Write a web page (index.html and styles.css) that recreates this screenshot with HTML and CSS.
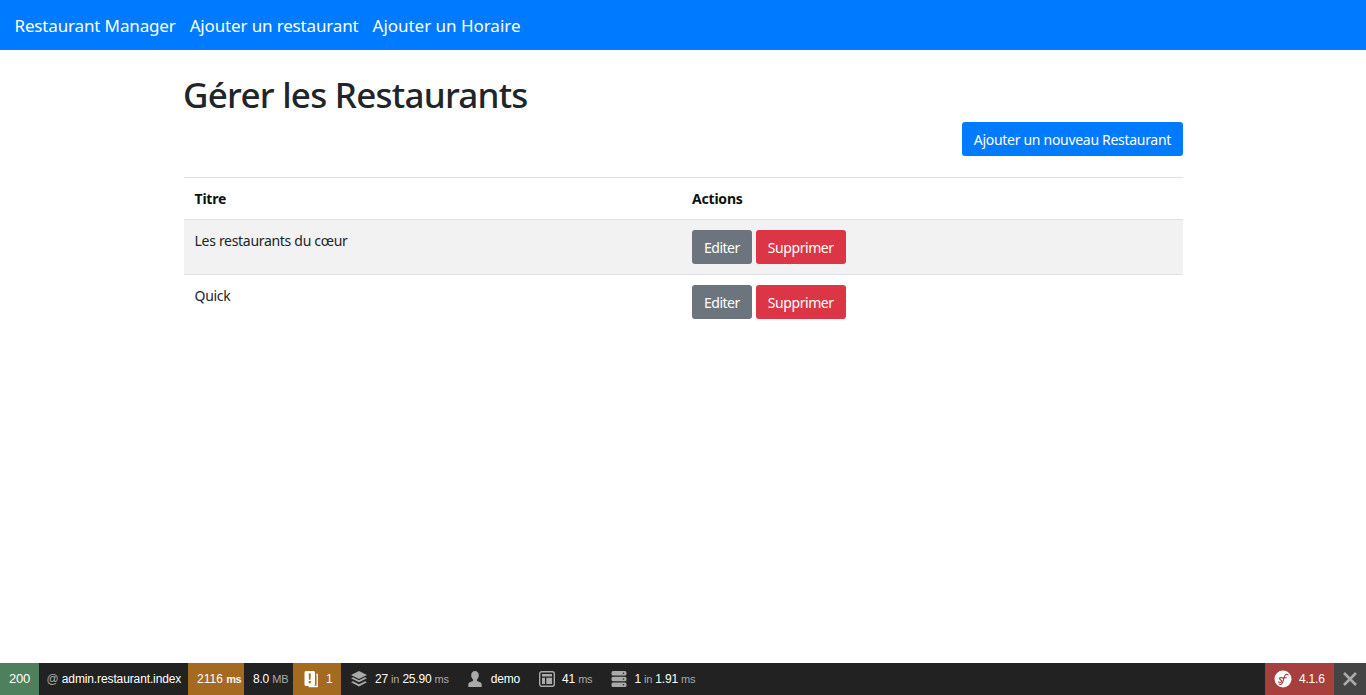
FILE: index.html
```html
<!DOCTYPE html>
<html lang="fr">
<head>
    <meta charset="UTF-8">
    <title>Gérer les Restaurants</title>
    <link rel="stylesheet" href="styles.css">
</head>
<body>
    <nav class="navbar">
        <a class="nav-link" href="#">Restaurant Manager</a>
        <a class="nav-link" href="#">Ajouter un restaurant</a>
        <a class="nav-link" href="#">Ajouter un Horaire</a>
    </nav>
    <main class="container">
        <h1 class="title">Gérer les Restaurants</h1>
        <div class="actions-bar">
            <a class="btn btn-primary" href="#">Ajouter un nouveau Restaurant</a>
        </div>
        <table class="table">
            <thead>
                <tr>
                    <th class="col-title">Titre</th>
                    <th>Actions</th>
                </tr>
            </thead>
            <tbody>
                <tr class="odd">
                    <td>Les restaurants du cœur</td>
                    <td>
                        <div class="row-actions">
                            <a class="btn btn-secondary" href="#">Editer</a>
                            <a class="btn btn-danger" href="#">Supprimer</a>
                        </div>
                    </td>
                </tr>
                <tr>
                    <td>Quick</td>
                    <td>
                        <div class="row-actions">
                            <a class="btn btn-secondary" href="#">Editer</a>
                            <a class="btn btn-danger" href="#">Supprimer</a>
                        </div>
                    </td>
                </tr>
            </tbody>
        </table>
    </main>

    <div class="toolbar">
        <div class="tb-block tb-status">200</div>
        <div class="tb-block tb-route"><span class="tb-at">@</span> admin.restaurant.index</div>
        <div class="tb-block tb-orange tb-request">2116 <span class="tb-unit tb-unit-light">ms</span></div>
        <div class="tb-block tb-memory">8.0 <span class="tb-unit">MB</span></div>
        <div class="tb-block tb-orange tb-log">
            <svg class="tb-icon" width="16" height="18" viewBox="0 0 16 18">
                <path fill="#fff" d="M3 1h7.500a1.500 1.500 0 0 1 1.500 1.500v12a1.500 1.500 0 0 1-1.500 1.500H3a1.500 1.500 0 0 1-1.500-1.500v-12A1.500 1.500 0 0 1 3 1z"/>
                <path fill="#a46a1f" d="M5.700 3.500h2.100l-.3 6.300H6zM5.700 11h2.100v2.200H5.700z"/>
                <path fill="none" stroke="#fff" stroke-width="1.300" d="M13.300 4.500h.9v12h-8.500"/>
            </svg>
            <span class="tb-num">1</span>
        </div>
        <div class="tb-block tb-twig">
            <svg class="tb-icon" width="18" height="18" viewBox="0 0 18 18">
                <path fill="#aaa" d="M9 1 17 5 9 9 1 5z"/>
                <path fill="#aaa" d="M1 8.200 3 7.200 9 10.200 15 7.200 17 8.200 9 12.300z"/>
                <path fill="#aaa" d="M1 12.200 3 11.200 9 14.200 15 11.200 17 12.200 9 16.500z"/>
            </svg>
            <span>27 <span class="tb-unit">in</span> 25.90 <span class="tb-unit">ms</span></span>
        </div>
        <div class="tb-block tb-user">
            <svg class="tb-icon" width="16" height="18" viewBox="0 0 16 18">
                <path fill="#aaa" d="M8 1c2.300 0 3.800 1.800 3.800 4.300 0 2-.9 3.500-1.800 4.300v1.200c0 .7 4.700 1.300 4.700 3.500V17H1.300v-2.700c0-2.200 4.700-2.800 4.700-3.500V9.600C5.100 8.800 4.200 7.300 4.200 5.300 4.200 2.800 5.700 1 8 1z"/>
            </svg>
            <span>demo</span>
        </div>
        <div class="tb-block tb-time">
            <svg class="tb-icon" width="18" height="18" viewBox="0 0 18 18">
                <rect x="1.700" y="1.700" width="14.600" height="14.600" rx="2" fill="none" stroke="#aaa" stroke-width="1.400"/>
                <path fill="#aaa" d="M4 4h10v2.400H4zM4 7.800h3v6.200H4zM8.300 7.800H14v6.200H8.300z"/>
            </svg>
            <span>41 <span class="tb-unit">ms</span></span>
        </div>
        <div class="tb-block tb-db">
            <svg class="tb-icon" width="18" height="18" viewBox="0 0 18 18">
                <path fill="#aaa" fill-rule="evenodd" d="M3 1h12a1.500 1.500 0 0 1 1.500 1.500v1.500A1.500 1.500 0 0 1 15 5.500H3A1.500 1.500 0 0 1 1.500 4V2.500A1.500 1.500 0 0 1 3 1zm10.500 1.500a.8.800 0 1 0 0 1.600.8.800 0 0 0 0-1.600z"/>
                <path fill="#aaa" fill-rule="evenodd" d="M3 6.800h12a1.500 1.500 0 0 1 1.500 1.500v1.400A1.500 1.500 0 0 1 15 11.200H3a1.500 1.500 0 0 1-1.500-1.500V8.300A1.500 1.500 0 0 1 3 6.800zm10.500 1.400a.8.800 0 1 0 0 1.600.8.800 0 0 0 0-1.600z"/>
                <path fill="#aaa" fill-rule="evenodd" d="M3 12.500h12a1.500 1.500 0 0 1 1.500 1.500v1.500A1.500 1.500 0 0 1 15 17H3a1.500 1.500 0 0 1-1.500-1.500V14A1.500 1.500 0 0 1 3 12.500zm10.500 1.400a.8.800 0 1 0 0 1.600.8.800 0 0 0 0-1.600z"/>
            </svg>
            <span>1 <span class="tb-unit">in</span> 1.91 <span class="tb-unit">ms</span></span>
        </div>
        <div class="tb-spacer"></div>
        <div class="tb-block tb-version">
            <svg class="tb-icon" width="18" height="18" viewBox="0 0 18 18">
                <circle cx="9" cy="9" r="8.500" fill="#fff"/>
                <path fill="none" stroke="#a83f3f" stroke-width="1.100" stroke-linecap="round" d="M14 4.800c-1.400-.9-2.800-.3-3.400 1.500L8.600 12.600c-.6 1.700-1.900 2.300-3.400 1.500M7 7.700h5.500M8.900 8.200C7.600 7.300 5.700 7.200 5.500 8.400c-.2 1.300 2.500 1.500 2.200 3.100-.2 1.100-2 1.200-3.300.4"/>
            </svg>
            <span>4.1.6</span>
        </div>
        <div class="tb-close">
            <svg width="14" height="14" viewBox="0 0 14 14">
                <path stroke="#aaa" stroke-width="2.600" d="M1 1 13 13M13 1 1 13"/>
            </svg>
        </div>
    </div>
</body>
</html>
```

FILE: styles.css
```css
*{
    box-sizing: border-box;
}
body{
    margin: 0;
    height: 695px;
    overflow: hidden;
    background: #fff;
    color: #212529;
    font-family: "Noto Sans", "Open Sans", sans-serif;
    font-size: 14px;
    line-height: 21px;
}
a{
    text-decoration: none;
}

.navbar{
    height: 50px;
    background: #007bff;
    display: flex;
    align-items: center;
    padding: 0 14.5px;
    gap: 14px;
}
.nav-link{
    color: #fff;
    font-size: 17px;
    letter-spacing: -0.15px;
}
.nav-link:last-child{
    letter-spacing: -0.03px;
}

.container{
    width: 1000px;
    margin: 0 auto;
    padding-left: 1px;
}
.title{
    margin: 0 0 0 -1px;
    padding-top: 20px;
    height: 72px;
    font-size: 35px;
    line-height: 50px;
    font-weight: 500;
    letter-spacing: -0.75px;
}
.actions-bar{
    display: flex;
    justify-content: flex-end;
    height: 55px;
}

.btn{
    display: inline-block;
    height: 34px;
    padding: 7px 12px 5px;
    border-radius: 3px;
    color: #fff;
    font-size: 14px;
    line-height: 22px;
    letter-spacing: -0.3px;
}
.btn-primary{
    background: #007bff;
}
.btn-secondary{
    background: #6c757d;
    letter-spacing: -0.5px;
}
.btn-danger{
    background: #dc3545;
    letter-spacing: -0.42px;
}
.row-actions{
    display: flex;
    gap: 4px;
}

.table{
    width: 100%;
    border-collapse: collapse;
    table-layout: fixed;
}
.table th,.table td{
    text-align: left;
    vertical-align: top;
    border-top: 1px solid #dee2e6;
    padding: 10px 11px;
}
.table th:first-child,.table td:first-child{
    padding-left: 10.5px;
}
.table th{
    height: 42px;
    color: #111;
    font-weight: 700;
    letter-spacing: -0.2px;
}
.table td{
    height: 55px;
    letter-spacing: -0.3px;
}
.col-title{
    width: 497px;
}
.table thead th{
    border-bottom: 1px solid #dee2e6;
}
.odd{
    background: #f2f2f2;
}

.toolbar{
    position: fixed;
    left: 0;
    right: 0;
    bottom: 0;
    height: 32px;
    background: #222;
    color: #fff;
    display: flex;
    font-family: "Liberation Sans", Arial, sans-serif;
    font-size: 12px;
    line-height: 32px;
    letter-spacing: -0.2px;
}
.tb-block{
    display: flex;
    align-items: center;
    height: 32px;
    padding: 0 9px;
    white-space: pre;
}
.tb-status{
    width: 39px;
    padding: 0;
    justify-content: center;
    background: #4f805d;
    font-size: 13px;
}
.tb-route{
    width: 149px;
    padding: 0 0 0 7.5px;
    letter-spacing: -0.12px;
}
.tb-at{
    color: #aaa;
}
.tb-orange{
    background: #a46a1f;
}
.tb-request{
    width: 56px;
    letter-spacing: 0;
}
.tb-memory{
    width: 49px;
}
.tb-unit{
    color: #aaa;
    font-size: 11px;
}
.tb-unit-light{
    color: #f5f5f5;
    font-weight: 700;
    letter-spacing: -0.4px;
}
.tb-log{
    width: 48px;
    padding: 0 0 0 10px;
    gap: 7px;
}
.tb-num{
    color: #f5f5f5;
}
.tb-icon{
    flex: none;
}
.tb-twig{
    gap: 7px;
}
.tb-user{
    gap: 8px;
}
.tb-time{
    gap: 6px;
}
.tb-db{
    gap: 6px;
}
.tb-spacer{
    flex: 1;
}
.tb-version{
    width: 69px;
    background: #a83f3f;
    gap: 7px;
}
.tb-close{
    width: 32px;
    background: #444;
    display: flex;
    align-items: center;
    justify-content: center;
}
```
